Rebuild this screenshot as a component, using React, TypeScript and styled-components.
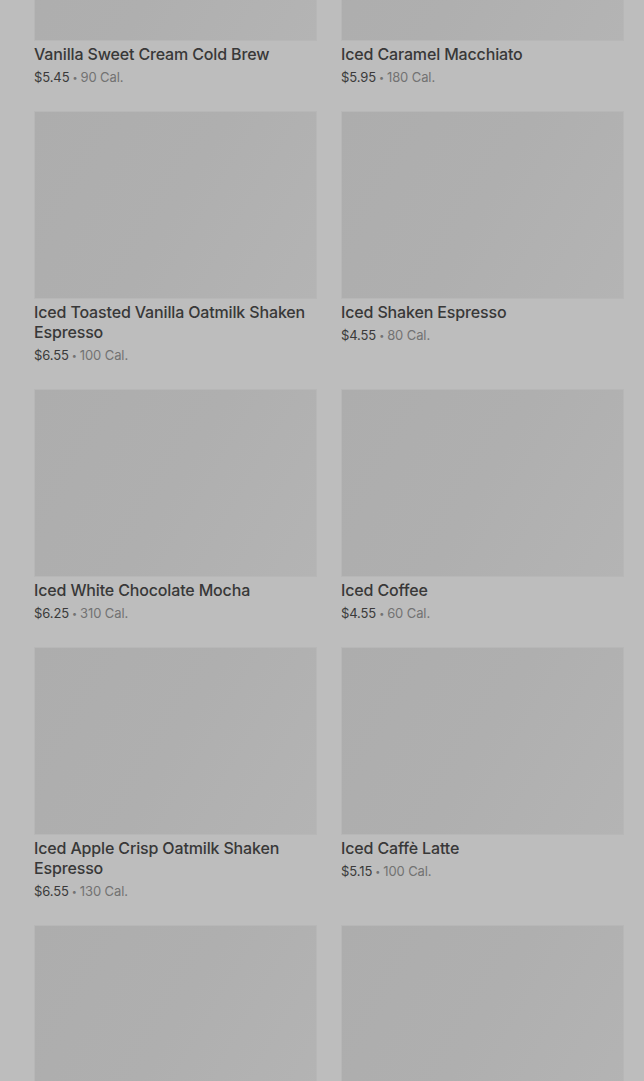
import React from "react";
import styled, { createGlobalStyle } from "styled-components";

const Global = createGlobalStyle`
  html, body { margin: 0; padding: 0; background: #bdbdbd; overflow: hidden; }
  body { font-family: Inter, "Noto Sans", "Liberation Sans", sans-serif; }
`;

const Grid = styled.div`
  display: grid;
  grid-template-columns: 283px 283px;
  column-gap: 24px;
  row-gap: 24px;
  padding: 0 20px 0 34px;
  margin-top: -147px;
  align-items: start;
`;

const Card = styled.div`
  display: flex;
  flex-direction: column;
`;

const Thumb = styled.div`
  height: 188px;
  box-sizing: border-box;
  border: 1px solid #b7b7b7;
  background: linear-gradient(120deg, #adadad 0%, #afafaf 50%, #b4b4b4 100%);
`;

const Title = styled.div`
  margin-top: 3px;
  font-size: 16px;
  line-height: 20px;
  font-weight: 500;
  color: #383838;
  letter-spacing: -0.15px;
`;

const Meta = styled.div`
  margin-top: 4px;
  height: 19px;
  display: flex;
  align-items: center;
  font-size: 13px;
  line-height: 19px;
  color: #3a3a3a;
  letter-spacing: -0.1px;
  white-space: pre;
`;

const Cal = styled.span`
  color: #727272;
`;

const Dot = styled.span`
  font-size: 9px;
  line-height: 1;
  color: #727272;
  margin: 0 3px;
`;

type Item = { name?: string; price?: string; cal?: string };

const items: Item[] = [
  { name: "Vanilla Sweet Cream Cold Brew", price: "$5.45", cal: "90 Cal." },
  { name: "Iced Caramel Macchiato", price: "$5.95", cal: "180 Cal." },
  { name: "Iced Toasted Vanilla Oatmilk Shaken Espresso", price: "$6.55", cal: "100 Cal." },
  { name: "Iced Shaken Espresso", price: "$4.55", cal: "80 Cal." },
  { name: "Iced White Chocolate Mocha", price: "$6.25", cal: "310 Cal." },
  { name: "Iced Coffee", price: "$4.55", cal: "60 Cal." },
  { name: "Iced Apple Crisp Oatmilk Shaken Espresso", price: "$6.55", cal: "130 Cal." },
  { name: "Iced Caffè Latte", price: "$5.15", cal: "100 Cal." },
  {},
  {},
];

export default function App() {
  return (
    <>
      <Global />
      <Grid>
        {items.map((it, i) => (
          <Card key={i}>
            <Thumb />
            {it.name && <Title>{it.name}</Title>}
            {it.price && (
              <Meta>
                <span>{it.price}</span>
                <Dot>•</Dot>
                <Cal>{it.cal}</Cal>
              </Meta>
            )}
          </Card>
        ))}
      </Grid>
    </>
  );
}
